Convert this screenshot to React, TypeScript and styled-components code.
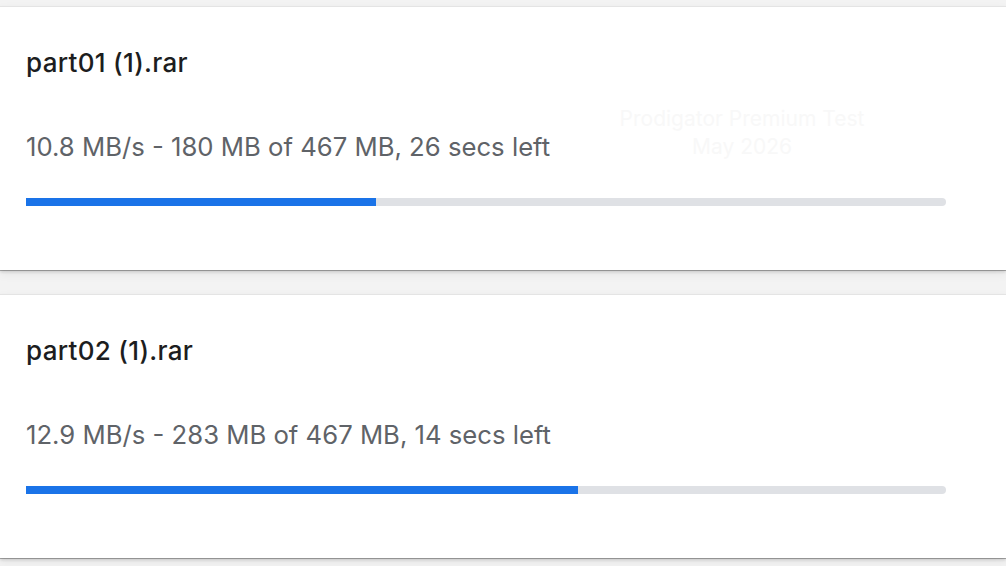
import React from "react";
import styled, { createGlobalStyle } from "styled-components";

const Global = createGlobalStyle`
  html, body {
    margin: 0;
    padding: 0;
    background: #f3f3f3;
    overflow: hidden;
  }
  * { box-sizing: border-box; }
`;

const List = styled.div`
  display: flex;
  flex-direction: column;
  gap: 24px;
  padding-top: 6px;
  width: 1006px;
  height: 566px;
  font-family: Inter, "Liberation Sans", Arial, sans-serif;
`;

const Card = styled.div`
  position: relative;
  flex: none;
  height: 264px;
  background: #ffffff;
  border-top: 1px solid #e4e4e4;
  box-shadow: 0 1px 0 rgba(0, 0, 0, 0.28), 0 2px 3px rgba(0, 0, 0, 0.14),
    0 4px 10px rgba(0, 0, 0, 0.06);
  padding: 40px 60px 0 26px;
  display: flex;
  flex-direction: column;
`;

const FileName = styled.div`
  font-size: 26px;
  font-weight: 500;
  color: #1c1d20;
  line-height: 32px;
  letter-spacing: 0.3px;
`;

const Status = styled.div`
  margin-top: 52px;
  font-size: 25.7px;
  font-weight: 400;
  color: #5f6368;
  line-height: 32px;
`;

const Track = styled.div`
  margin-top: 35px;
  width: 920px;
  height: 8px;
  background: #dfe1e5;
  border-radius: 0 4px 4px 0;
  overflow: hidden;
`;

const Fill = styled.div`
  height: 100%;
  background: #1a73e8;
`;

const Watermark = styled.div`
  position: absolute;
  left: 600px;
  top: 98px;
  width: 284px;
  text-align: center;
  font-size: 21px;
  line-height: 28px;
  color: #f8f8f8;
  pointer-events: none;
`;

type Download = {
  name: string;
  status: string;
  progress: number;
};

const downloads: Download[] = [
  {
    name: "part01 (1).rar",
    status: "10.8 MB/s - 180 MB of 467 MB, 26 secs left",
    progress: 350 / 920,
  },
  {
    name: "part02 (1).rar",
    status: "12.9 MB/s - 283 MB of 467 MB, 14 secs left",
    progress: 552 / 920,
  },
];

export default function App() {
  return (
    <>
      <Global />
      <List>
        {downloads.map((d, i) => (
          <Card key={d.name}>
            <FileName>{d.name}</FileName>
            <Status>{d.status}</Status>
            <Track>
              <Fill style={{ width: `${d.progress * 100}%` }} />
            </Track>
            {i === 0 && (
              <Watermark>
                Prodigator Premium Test
                <br />
                May 2026
              </Watermark>
            )}
          </Card>
        ))}
      </List>
    </>
  );
}
